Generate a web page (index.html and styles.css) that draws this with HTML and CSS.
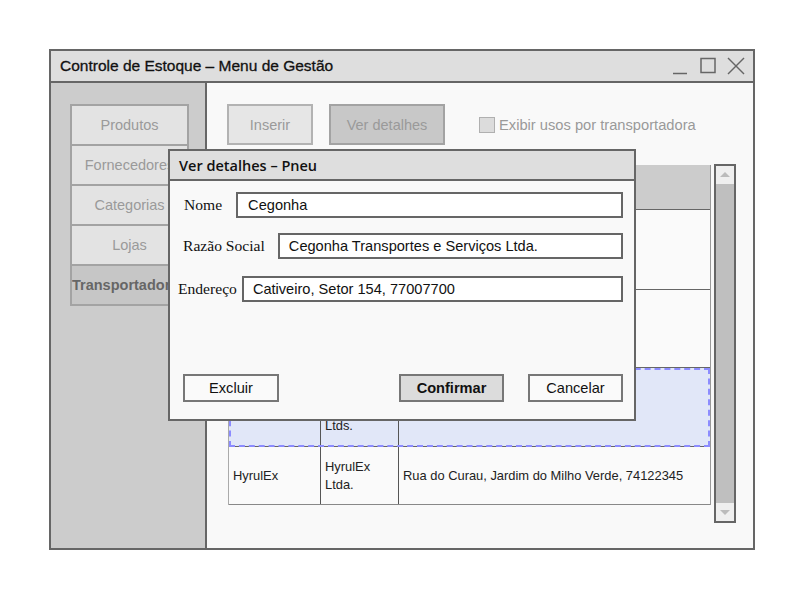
FILE: index.html
```html
<!DOCTYPE html>
<html lang="pt-BR">
<head>
<meta charset="utf-8">
<title>Controle de Estoque</title>
<link rel="stylesheet" href="styles.css">
</head>
<body>
<div class="window">
  <div class="titlebar">
    <span class="title">Controle de Estoque – Menu de Gestão</span>
    <svg class="winctl" width="74" height="20" viewBox="0 0 74 20">
      <line x1="0" y1="16.5" x2="14" y2="16.5" stroke="#666" stroke-width="1.5"/>
      <rect x="28" y="1.5" width="14" height="14" fill="none" stroke="#666" stroke-width="1.5"/>
      <line x1="55" y1="1" x2="71" y2="17" stroke="#666" stroke-width="1.5"/>
      <line x1="71" y1="1" x2="55" y2="17" stroke="#666" stroke-width="1.5"/>
    </svg>
  </div>
  <div class="body">
    <nav class="sidebar">
      <div class="navbtn">Produtos</div>
      <div class="navbtn">Fornecedores</div>
      <div class="navbtn">Categorias</div>
      <div class="navbtn">Lojas</div>
      <div class="navbtn active">Transportadora</div>
    </nav>
    <main class="main">
      <div class="toolbar">
        <div class="btn btn-light">Inserir</div>
        <div class="btn btn-dark">Ver detalhes</div>
        <label class="check"><span class="box"></span>Exibir usos por transportadora</label>
      </div>
      <div class="tablewrap">
        <div class="table">
          <div class="row head"><div class="c1"></div><div class="c2"></div><div class="c3"></div></div>
          <div class="row r1"><div class="c1"></div><div class="c2"></div><div class="c3"></div></div>
          <div class="row r2"><div class="c1"></div><div class="c2"></div><div class="c3"></div></div>
          <div class="row r3 selected"><div class="c1"></div><div class="c2 bottom">Ltds.</div><div class="c3"></div></div>
          <div class="row r4"><div class="c1">HyrulEx</div><div class="c2">HyrulEx Ltda.</div><div class="c3">Rua do Curau, Jardim do Milho Verde, 74122345</div></div>
        </div>
        <div class="scrollbar">
          <div class="arrow up"></div>
          <div class="track"></div>
          <div class="arrow down"></div>
        </div>
      </div>
    </main>
  </div>

  <div class="dialog">
    <div class="dtitle">Ver detalhes – Pneu</div>
    <div class="dbody">
      <div class="field f-nome"><span class="lbl">Nome</span><div class="input">Cegonha</div></div>
      <div class="field f-razao"><span class="lbl">Razão Social</span><div class="input">Cegonha Transportes e Serviços Ltda.</div></div>
      <div class="field f-end"><span class="lbl">Endereço</span><div class="input">Cativeiro, Setor 154, 77007700</div></div>
      <div class="actions">
        <div class="dbtn excluir">Excluir</div>
        <div class="spacer"></div>
        <div class="dbtn confirmar">Confirmar</div>
        <div class="dbtn cancelar">Cancelar</div>
      </div>
    </div>
  </div>
</div>
</body>
</html>
```

FILE: styles.css
```css
* { box-sizing: border-box; }
html, body { margin: 0; background: #fff; }
body {
  padding: 49px 0 0 49px;
  font-family: "Liberation Sans", Arial, sans-serif;
  color: #222;
}
.window {
  position: relative;
  width: 706px;
  height: 501px;
  border: 2px solid #666;
  display: flex;
  flex-direction: column;
  background: #f9f9f9;
}
.titlebar {
  height: 32px;
  flex: none;
  background: #dedede;
  border-bottom: 2px solid #666;
  display: flex;
  align-items: center;
  padding: 0 6px 0 9px;
}
.title {
  font-size: 15.5px;
  color: #111;
  -webkit-text-stroke: 0.3px #111;
  flex: 1;
}
.winctl { display: block; margin-top: 2px; }
.body {
  flex: 1;
  display: flex;
  min-height: 0;
}
.sidebar {
  width: 156px;
  flex: none;
  background: #cccccc;
  border-right: 2px solid #666;
  padding: 21px 0 0 19px;
}
.navbtn {
  width: 119px;
  height: 42px;
  margin-top: -2px;
  background: #e3e3e3;
  border: 2px solid #a3a3a3;
  color: #9a9a9a;
  font-size: 14.5px;
  display: flex;
  align-items: center;
  justify-content: center;
  white-space: nowrap;
  overflow: hidden;
}
.navbtn:first-child { margin-top: 0; height: 42px; }
.navbtn.active {
  background: #c6c6c6;
  color: #666;
  font-weight: bold;
  justify-content: flex-start;
  padding-left: 0;
}
.main {
  flex: 1;
  padding: 21px 0 0 20px;
}
.toolbar {
  display: flex;
  align-items: center;
  height: 41px;
}
.btn {
  height: 41px;
  border: 2px solid #b3b3b3;
  font-size: 14.5px;
  color: #9a9a9a;
  display: flex;
  align-items: center;
  justify-content: center;
}
.btn-light { width: 86px; background: #e6e6e6; }
.btn-dark { width: 116px; background: #c8c8c8; border-color: #a3a3a3; margin-left: 16px; }
.check {
  margin-left: 34px;
  display: flex;
  align-items: center;
  font-size: 14.7px;
  color: #9a9a9a;
}
.box {
  width: 16px;
  height: 16px;
  border: 1px solid #b0b0b0;
  background: #dcdcdc;
  margin-right: 4px;
}
.tablewrap {
  display: flex;
  align-items: flex-start;
  margin-top: 19px;
}
.table {
  width: 483px;
  margin-top: 1px;
  margin-left: 1px;
  border-left: 1px solid #aaa;
  border-right: 1px solid #999;
  font-size: 12.9px;
  color: #222;
}
.row {
  display: flex;
  border-bottom: 1px solid #666;
  background: #fafafa;
}
.row > div {
  padding: 0 4px;
  display: flex;
  align-items: center;
  line-height: 18px;
}
.row .c1 { width: 91px; }
.row .c2 { width: 78px; border-left: 1px solid #555; }
.row .c3 { flex: 1; border-left: 1px solid #555; }
.head { height: 45px; background: #cccccc; }
.head > div { border-left-color: transparent !important; }
.r1 { height: 80px; }
.r2 { height: 78px; }
.r3 { height: 79px; }
.r4 { height: 58px; border-bottom-color: #888; }
.selected {
  background: #e1e7f8;
  outline: 2px dashed #8c8cff;
  outline-offset: -2px;
  position: relative;
}
.row .c2.bottom { align-items: flex-end; padding-bottom: 11px; }
.scrollbar {
  width: 22px;
  height: 359px;
  margin-left: 3px;
  border: 2px solid #666;
  display: flex;
  flex-direction: column;
  background: #bfbfbf;
}
.arrow {
  height: 18px;
  background: #efefef;
  position: relative;
}
.arrow::after {
  content: "";
  position: absolute;
  left: 4px;
  border-left: 5px solid transparent;
  border-right: 5px solid transparent;
}
.arrow.up::after { top: 6px; border-bottom: 5px solid #bbb; }
.arrow.down::after { top: 7px; border-top: 5px solid #bbb; }
.track { flex: 1; }

/* dialog */
.dialog {
  position: absolute;
  left: 117px;
  top: 98px;
  width: 468px;
  height: 272px;
  border: 2px solid #666;
  background: #f9f9f9;
  display: flex;
  flex-direction: column;
}
.dtitle {
  height: 30px;
  flex: none;
  background: #dedede;
  border-bottom: 2px solid #666;
  font-family: "Open Sans", "Liberation Sans", sans-serif;
  font-weight: 600;
  font-size: 14.5px;
  color: #111;
  display: flex;
  align-items: center;
  padding-left: 9px;
}
.dbody {
  flex: 1;
  display: flex;
  flex-direction: column;
  padding: 11px 11px 0 0;
}
.field {
  display: flex;
  align-items: center;
  height: 26px;
}
.lbl {
  font-family: "Liberation Serif", "Times New Roman", serif;
  font-size: 15.6px;
  color: #111;
  white-space: nowrap;
}
.input {
  flex: 1;
  height: 26px;
  background: #fff;
  border: 2px solid #666;
  font-size: 14.6px;
  color: #111;
  display: flex;
  align-items: center;
  padding-left: 9px;
}
.f-nome { padding-left: 14px; }
.f-nome .lbl { margin-right: 14px; }
.f-nome .input { padding-left: 10px; }
.f-razao { padding-left: 13px; margin-top: 15px; }
.f-razao .lbl { margin-right: 13px; }
.f-end { padding-left: 8px; margin-top: 17px; }
.f-end .lbl { margin-right: 5px; }
.actions {
  display: flex;
  margin-top: 72px;
  padding-left: 13px;
}
.spacer { flex: 1; }
.dbtn {
  height: 28px;
  border: 2px solid #777;
  background: #fafafa;
  font-size: 14.6px;
  color: #111;
  display: flex;
  align-items: center;
  justify-content: center;
}
.excluir { width: 96px; }
.confirmar { width: 105px; background: #dcdcdc; font-weight: bold; }
.cancelar { width: 95px; margin-left: 24px; }
```
